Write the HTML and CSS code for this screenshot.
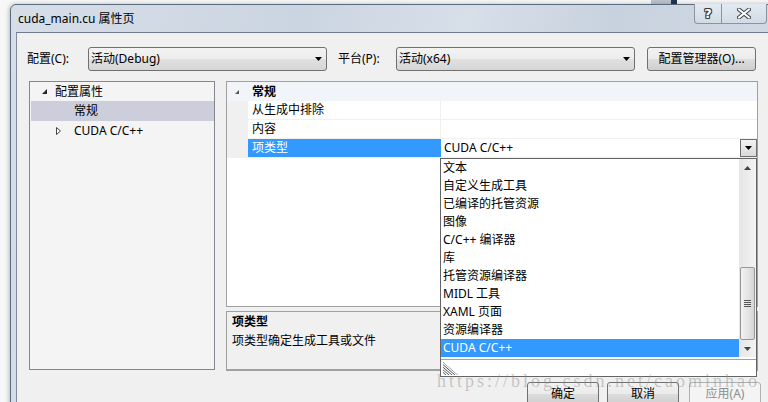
FILE: index.html
```html
<!DOCTYPE html>
<html>
<head>
<meta charset="utf-8">
<link rel="stylesheet" href="styles.css">
</head>
<body>
<div class="bgwin bgwin1"></div>
<div class="bgwin bgwin2"></div>
<div class="window">
  <div class="titlebar">
    <span class="title">cuda_main.cu 属性页</span>
    <div class="caps">
      <div class="cap help"><span>?</span></div>
      <div class="cap close">
        <svg width="14" height="11" viewBox="0 0 14 11"><path d="M2 1.5 L12 9.5 M12 1.5 L2 9.5" stroke="#3a3f46" stroke-width="4" stroke-linecap="square"/><path d="M2 1.5 L12 9.5 M12 1.5 L2 9.5" stroke="#fff" stroke-width="2" stroke-linecap="square"/></svg>
      </div>
    </div>
  </div>
  <div class="client">
    <div class="toprow">
      <span class="lbl lbl1">配置(C):</span>
      <div class="combo"><span class="ctext">活动(Debug)</span><svg class="arrow" width="7" height="4" viewBox="0 0 7 4"><polygon points="0,0 7,0 3.5,4" fill="#000"/></svg></div>
      <span class="lbl lbl2">平台(P):</span>
      <div class="combo"><span class="ctext">活动(x64)</span><svg class="arrow" width="7" height="4" viewBox="0 0 7 4"><polygon points="0,0 7,0 3.5,4" fill="#000"/></svg></div>
      <div class="btn mgr">配置管理器(O)...</div>
    </div>
    <div class="main">
      <div class="tree">
        <div class="trow t1"><svg class="texp" width="5" height="5" viewBox="0 0 5 5"><polygon points="5,0 5,5 0,5" fill="#262626"/></svg><span>配置属性</span></div>
        <div class="trow t2 tsel"><span>常规</span></div>
        <div class="trow t3"><svg class="tcol" width="5" height="8" viewBox="0 0 5 8"><polygon points="0.5,0.5 4.5,4 0.5,7.5" fill="#fff" stroke="#444" stroke-width="1"/></svg><span>CUDA C/C++</span></div>
      </div>
      <div class="right">
        <div class="grid">
          <div class="ghead"><svg class="gexp" width="4" height="4" viewBox="0 0 4 4"><polygon points="4,0 4,4 0,4" fill="#555"/></svg><b>常规</b></div>
          <div class="grow"><div class="gl"></div><div class="gn">从生成中排除</div><div class="gv"></div></div>
          <div class="grow"><div class="gl"></div><div class="gn">内容</div><div class="gv"></div></div>
          <div class="grow gsel"><div class="gl"></div><div class="gn">项类型</div><div class="gv">CUDA C/C++
              <div class="gdrop"><svg width="7" height="4" viewBox="0 0 7 4"><polygon points="0,0 7,0 3.5,4" fill="#000"/></svg></div>
              <div class="dlist">
                <div class="dbody">
                  <div class="ditems">
                    <div class="di">文本</div>
                    <div class="di">自定义生成工具</div>
                    <div class="di">已编译的托管资源</div>
                    <div class="di">图像</div>
                    <div class="di">C/C++ 编译器</div>
                    <div class="di">库</div>
                    <div class="di">托管资源编译器</div>
                    <div class="di">MIDL 工具</div>
                    <div class="di">XAML 页面</div>
                    <div class="di">资源编译器</div>
                    <div class="di disel">CUDA C/C++</div>
                  </div>
                  <div class="sbar">
                    <div class="sbtn"><svg width="7" height="4" viewBox="0 0 7 4"><polygon points="3.5,0 7,4 0,4" fill="#444"/></svg></div>
                    <div class="strack">
                      <div class="sthumb"><div class="grip"></div></div>
                    </div>
                    <div class="sbtn"><svg width="7" height="4" viewBox="0 0 7 4"><polygon points="0,0 7,0 3.5,4" fill="#444"/></svg></div>
                  </div>
                </div>
                <div class="dfoot">
                  <svg class="hatch" width="15" height="13" viewBox="0 0 15 13"><defs><clipPath id="tri"><polygon points="0,0 0,13 15,13"/></clipPath></defs><g clip-path="url(#tri)" stroke="#555" stroke-width="1"><path d="M-6 0 L9 13 M-3 0 L12 13 M0 0 L15 13 M3 0 L18 13 M-9 0 L6 13 M-12 0 L3 13"/></g></svg>
                </div>
              </div>
            </div>
          </div>
        </div>
        <div class="desc">
          <div class="dtitle">项类型</div>
          <div class="dtext">项类型确定生成工具或文件</div>
        </div>
      </div>
    </div>
    <div class="buttons">
      <div class="btn bb">确定</div>
      <div class="btn bb">取消</div>
      <div class="btn bb dis">应用(A)</div>
    </div>
  </div>
</div>
<div class="watermark">https://blog.csdn.net/caominhao</div>
</body>
</html>
```
FILE: styles.css
```css
* { box-sizing: border-box; }
html, body { margin: 0; padding: 0; }
body {
  width: 768px; height: 402px; overflow: hidden; position: relative;
  background: #f7f7f7;
  font-family: "Noto Sans", "Noto Sans CJK SC", sans-serif;
  font-size: 12px; color: #000;
}
.bgwin { position: absolute; top: 0; height: 4px; }
.bgwin1 { left: 651px; width: 20px; background: #bcc3cc; }
.bgwin2 { left: 671px; width: 6px; background: #1f3553; }

.window {
  position: absolute; left: 10px; top: 4px; width: 766px; height: 420px;
  border: 1px solid #5b6b7f; border-radius: 6px 6px 0 0;
  background: linear-gradient(100deg, #d6dee8 0%, #cbd5e1 35%, #d7dfe9 55%, #c8d2de 72%, #d4dce6 100%);
  padding: 0 5px;
  display: flex; flex-direction: column;
  box-shadow: -1px 0 4px rgba(0,0,0,.25);
}
.titlebar { height: 27px; display: flex; align-items: flex-start; }
.title { padding: 6px 0 0 2px; line-height: 16px; font-size: 12px; }
.caps { margin-left: auto; margin-right: 3px; margin-top: -1px; display: flex; height: 20px; }
.cap {
  height: 20px; border: 1px solid #8894a3; border-top: none;
  background: linear-gradient(#e3e9f0, #d2dbe5);
  display: flex; align-items: center; justify-content: center;
}
.help { width: 27px; border-radius: 0 0 0 4px; border-right: none; }
.help span {
  font-family: "DejaVu Sans", sans-serif; font-weight: bold; font-size: 13px; line-height: 14px;
  color: #fff;
  text-shadow: 1px 0 0 #3a3f46, -1px 0 0 #3a3f46, 0 1px 0 #3a3f46, 0 -1px 0 #3a3f46, 1px 1px 0 #3a3f46, -1px -1px 0 #3a3f46, 1px -1px 0 #3a3f46, -1px 1px 0 #3a3f46;
}
.close { width: 46px; border-radius: 0 0 4px 0; }

.client {
  flex: 1; background: #f0f0f0;
  border-top: 1px solid #6f7b8a; border-left: 1px solid #7f8b9a; border-right: 1px solid #7f8b9a;
}
.toprow { display: flex; align-items: center; margin-top: 14px; padding-left: 10px; height: 24px; }
.lbl { line-height: 16px; }
.lbl1 { width: 61px; }
.lbl2 { width: 58px; margin-left: 11px; }
.combo {
  width: 239px; height: 24px; border: 1px solid #707070; border-radius: 3px;
  background: linear-gradient(#f3f3f3 0%, #ececec 50%, #e0e0e0 51%, #d6d6d6 100%);
  display: flex; align-items: center; padding: 0 4px 0 2px;
}
.ctext { line-height: 16px; flex: 1; }
.arrow { display: block; }
.btn {
  border: 1px solid #707070; border-radius: 3px;
  background: linear-gradient(#f2f2f2 0%, #ebebeb 50%, #dddddd 51%, #cfcfcf 100%);
  display: flex; align-items: center; justify-content: center; line-height: 16px;
}
.mgr { width: 109px; height: 24px; margin-left: 12px; }

.main { display: flex; margin-top: 10px; padding-left: 12px; height: 290px; }
.tree { width: 186px; height: 289px; border: 1px solid #828790; background: #f4f4f4; }
.trow { display: flex; align-items: center; height: 20px; line-height: 16px; }
.t1 { height: 19px; padding-left: 12px; }
.texp { margin-right: 8px; }
.t2 { padding-left: 43px; }
.tsel { background: #cccedb; margin-left: 1px; }
.t3 { padding-left: 26px; }
.tcol { margin-right: 13px; }

.right { margin-left: 11px; width: 532px; display: flex; flex-direction: column; }
.grid { height: 226px; border: 1px solid #a0a0a0; background: #fff; position: relative; }
.ghead { height: 19px; background: #f1f4f9; display: flex; align-items: center; padding-left: 8px; line-height: 16px; }
.gexp { margin-right: 13px; }
.ghead b { font-weight: bold; }
.grow { display: flex; height: 19px; border-bottom: 1px solid #f0f0f0; }
.gl { width: 21px; background: #f0f0f0; }
.gn { width: 193px; padding-left: 4px; line-height: 18px; border-right: 1px solid #f0f0f0; }
.gv { flex: 1; position: relative; padding-left: 3px; line-height: 18px; }
.gsel .gn { background: #3399ff; color: #fff; border-right-color: #3399ff; }
.gdrop {
  position: absolute; right: 0; top: 0; width: 17px; height: 18px;
  border: 1px solid #6e6e6e;
  background: linear-gradient(#f4f4f4, #d9d9d9);
  display: flex; align-items: center; justify-content: center;
}
.gdrop svg { display: block; }
.dlist {
  position: absolute; left: -1px; top: 19px; width: 317px; height: 219px;
  border: 1px solid #646464; background: #fff; z-index: 5;
}
.dbody { display: flex; height: 198px; }
.ditems { flex: 1; }
.di { height: 18px; line-height: 18px; padding-left: 2px; }
.disel { background: #3399ff; color: #fff; }
.sbar { width: 17px; display: flex; flex-direction: column; background: linear-gradient(90deg, #e6e6e6, #f3f3f3); }
.sbtn { height: 17px; display: flex; align-items: center; justify-content: center; }
.sbtn svg { display: block; }
.strack { flex: 1; position: relative; }
.sthumb {
  position: absolute; left: 1px; right: 1px; top: 91px; height: 73px;
  border: 1px solid #979797; border-radius: 2px;
  background: linear-gradient(90deg, #f2f2f2, #e2e2e2 60%, #d5d5d5);
  display: flex; align-items: center; justify-content: center;
}
.grip {
  width: 7px; height: 7px;
  background: repeating-linear-gradient(#555 0 1px, transparent 1px 2px);
}
.dfoot { margin-top: 2px; border-top: 1px solid #a0a0a0; height: 17px; position: relative; }
.hatch { position: absolute; left: 2px; top: 2px; display: block; }

.desc { margin-top: 4px; height: 60px; border: 1px solid #a0a0a0; border-bottom-width: 2px; background: #f0f0f0; padding: 1px 0 0 5px; }
.dtitle { font-weight: bold; line-height: 18px; }
.dtext { line-height: 18px; margin-top: 1px; }

.buttons { display: flex; margin-top: 11px; padding-left: 510px; }
.bb { width: 72px; height: 23px; }
.bb + .bb { margin-left: 8px; }
.bb.dis { margin-left: 10px; color: #8d8d8d; border-color: #adb2b5; background: #f4f4f4; }

.watermark {
  position: absolute; left: 437px; top: 372px; z-index: 10;
  font-family: "Liberation Serif", serif; font-size: 18px; line-height: 18px;
  letter-spacing: 3px; color: rgba(140,140,140,0.45); white-space: nowrap;
}
```
